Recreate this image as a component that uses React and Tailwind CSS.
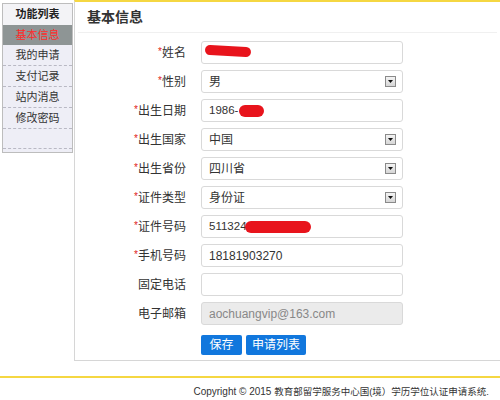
import React from 'react';

const font = { fontFamily: '"Liberation Sans", "Noto Sans CJK SC", sans-serif' };

const menu = ['我的申请', '支付记录', '站内消息', '修改密码'];

function Blot({ className }) {
  return <span className={`absolute bg-[#e8141c] rounded-full ${className}`} />;
}

function SelectArrow() {
  return (
    <span className="ml-auto w-[11px] h-[11px] border border-[#8a8a8a] bg-gradient-to-b from-[#f4f4f4] to-[#d6d6d6] flex items-center justify-center">
      <svg width="5" height="3" viewBox="0 0 5 3"><path d="M0 0h5L2.5 3z" fill="#111" /></svg>
    </span>
  );
}

function Row({ label, required, children, muted }) {
  return (
    <div className="flex items-center h-[23px]">
      <div className="w-[112px] pr-[1px] text-right text-[12px] text-[#333]">
        {required && <span className="text-[#e02020] text-[10px] align-top">*</span>}
        {label}
      </div>
      <div
        className={`relative ml-[14px] w-[202px] h-[23px] rounded-[3px] border border-[#d9d9d9] flex items-center px-[7px] pr-[6px] text-[12px] ${
          muted ? 'bg-[#ebebeb] text-[#888]' : 'bg-white text-[#333]'
        }`}
      >
        {children}
      </div>
    </div>
  );
}

export default function App() {
  return (
    <div className="w-[500px] h-[400px] bg-white overflow-hidden" style={font}>
      <div className="flex h-[361px]">
        {/* sidebar */}
        <div className="w-[74px] pl-[2px] pt-[3px]">
          <div className="w-[71px] h-[150px] border border-[#bdbdbd] bg-[#eeeef6] text-[11px] text-[#333]">
            <div className="h-[21px] flex items-center justify-center font-bold bg-[#f3f3f6] text-[#222]">功能列表</div>
            <div className="h-[20px] flex items-center justify-center bg-[#8e9595] text-[#ff2a2a]">基本信息</div>
            {menu.map((m) => (
              <div key={m} className="h-[21px] flex items-center justify-center border-b border-dashed border-[#b9b9c4]">
                {m}
              </div>
            ))}
            <div className="h-[20px] border-b border-dashed border-[#b9b9c4]" />
          </div>
        </div>

        {/* main */}
        <div className="flex-1 border-t-2 border-t-[#f5d742] border-l border-l-[#d6d6d6] border-b border-b-[#d6d6d6] flex flex-col">
          <div className="h-[31px] mx-[3px] border-b border-[#f0f0f0] flex items-center pl-[9px] text-[14px] font-bold text-[#333]">基本信息</div>
          <div className="pt-[8px] flex flex-col gap-[6px]">
            <Row label="姓名" required>
              <Blot className="left-[3px] top-[4px] w-[46px] h-[10px] rotate-[3deg]" />
            </Row>
            <Row label="性别" required>男<SelectArrow /></Row>
            <Row label="出生日期" required>
              <span className="text-[11.5px]">1986-</span>
              <Blot className="left-[37px] top-[5px] w-[25px] h-[12px]" />
            </Row>
            <Row label="出生国家" required>中国<SelectArrow /></Row>
            <Row label="出生省份" required>四川省<SelectArrow /></Row>
            <Row label="证件类型" required>身份证<SelectArrow /></Row>
            <Row label="证件号码" required>
              <span className="text-[11.5px]">511324</span>
              <Blot className="left-[43px] top-[5px] w-[66px] h-[12px]" />
            </Row>
            <Row label="手机号码" required>18181903270</Row>
            <Row label="固定电话" />
            <Row label="电子邮箱" muted>aochuangvip@163.com</Row>
          </div>
          <div className="flex gap-[4px] ml-[126px] mt-[10px]">
            <button className="w-[41px] h-[20px] rounded-[2px] bg-[#1177dd] text-white text-[12px]">保存</button>
            <button className="w-[60px] h-[20px] rounded-[2px] bg-[#1177dd] text-white text-[12px]">申请列表</button>
          </div>
        </div>
      </div>

      {/* footer */}
      <div className="mt-[15px] border-t-2 border-[#f5d742] pt-[6px] pr-[11px] text-right text-[9.5px] text-[#333]">
        <span className="text-[10px]">Copyright © 2015 </span>教育部留学服务中心国(境）学历学位认证申请系统.
      </div>
    </div>
  );
}
